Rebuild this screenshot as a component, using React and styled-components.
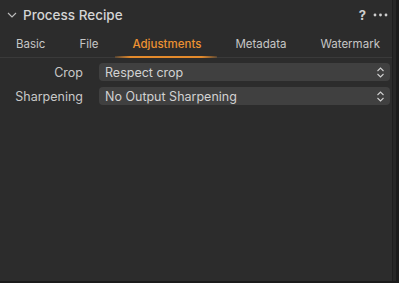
import React from 'react';
import styled, { createGlobalStyle } from 'styled-components';

const GlobalStyle = createGlobalStyle`
  html, body {
    margin: 0;
    padding: 0;
    background: #1b1b1b;
  }
  body {
    font-family: Inter, "Noto Sans", sans-serif;
    -webkit-font-smoothing: antialiased;
  }
`;

const Frame = styled.div`
  display: flex;
  width: 399px;
  height: 283px;
  background: #1b1b1b;
`;

const Panel = styled.div`
  display: flex;
  flex-direction: column;
  width: 392px;
  height: 281px;
  background: #2c2c2c;
  border-right: 1px solid #1e1e1e;
`;

const Gutter = styled.div`
  width: 3px;
  height: 281px;
  background: #272727;
`;

const Header = styled.div`
  display: flex;
  align-items: center;
  height: 29px;
  padding: 0 4px 0 7px;
`;

const Title = styled.h1`
  flex: 1;
  margin: 0 0 0 6px;
  color: #d4d4d4;
  font-size: 13.5px;
  font-weight: 500;
`;

const HeaderActions = styled.div`
  display: flex;
  align-items: center;
  gap: 7px;
  color: #cfcfcf;
`;

const Help = styled.span`
  font-size: 13px;
  font-weight: 700;
`;

const Tabs = styled.div`
  display: flex;
  justify-content: space-between;
  align-items: center;
  height: 28px;
  padding: 0 12px 0 16px;
  border-bottom: 1px solid #3a3a3a;
`;

const Tab = styled.div`
  position: relative;
  height: 28px;
  line-height: 30px;
  font-size: 11.5px;
  color: ${({ $active }) => ($active ? '#ec9232' : '#c6c6c6')};
  font-weight: ${({ $active }) => ($active ? 500 : 400)};

  &::after {
    content: '';
    display: ${({ $active }) => ($active ? 'block' : 'none')};
    position: absolute;
    left: -17px;
    right: -16px;
    bottom: -1px;
    height: 2px;
    background: linear-gradient(90deg, rgba(236, 146, 50, 0.2), #e38a2c 15%, #e38a2c 85%, rgba(236, 146, 50, 0.2));
  }
`;

const Form = styled.div`
  display: grid;
  grid-template-columns: 83px 1fr;
  column-gap: 16px;
  row-gap: 6px;
  padding: 5px 2px 0 0;
  align-items: center;
`;

const Label = styled.div`
  text-align: right;
  font-size: 12.5px;
  color: #c8c8c8;
`;

const Select = styled.div`
  display: flex;
  align-items: center;
  justify-content: space-between;
  height: 18px;
  padding: 0 5px 0 6px;
  border-radius: 4px;
  background: #404040;
  font-size: 12.5px;
  color: #d2d2d2;
`;

function Chevron() {
  return (
    <svg width="10" height="6" viewBox="0 0 10 6" fill="none">
      <path d="M1 1l4 4 4-4" stroke="#bdbdbd" strokeWidth="1.1" />
    </svg>
  );
}

function Dots() {
  return (
    <svg width="15" height="4" viewBox="0 0 15 4" fill="#cfcfcf">
      <circle cx="2" cy="2" r="1.4" />
      <circle cx="7.5" cy="2" r="1.4" />
      <circle cx="13" cy="2" r="1.4" />
    </svg>
  );
}

function Stepper() {
  return (
    <svg width="9" height="13" viewBox="0 0 9 13" fill="none">
      <path d="M1.5 5l3-3 3 3M1.5 8l3 3 3-3" stroke="#d0d0d0" strokeWidth="1.1" />
    </svg>
  );
}

const tabs = ['Basic', 'File', 'Adjustments', 'Metadata', 'Watermark'];

const rows = [
  { label: 'Crop', value: 'Respect crop' },
  { label: 'Sharpening', value: 'No Output Sharpening' },
];

export default function App() {
  return (
    <Frame>
      <GlobalStyle />
      <Panel>
        <Header>
          <Chevron />
          <Title>Process Recipe</Title>
          <HeaderActions>
            <Help>?</Help>
            <Dots />
          </HeaderActions>
        </Header>
        <Tabs>
          {tabs.map((t) => (
            <Tab key={t} $active={t === 'Adjustments'}>
              {t}
            </Tab>
          ))}
        </Tabs>
        <Form>
          {rows.map((r) => (
            <React.Fragment key={r.label}>
              <Label>{r.label}</Label>
              <Select>
                {r.value}
                <Stepper />
              </Select>
            </React.Fragment>
          ))}
        </Form>
      </Panel>
      <Gutter />
    </Frame>
  );
}
